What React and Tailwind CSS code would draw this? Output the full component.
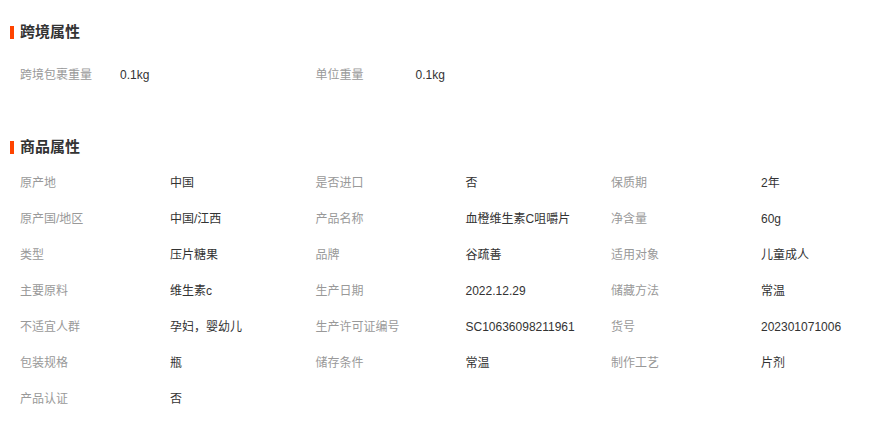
const CROSS = [
  ["跨境包裹重量", "0.1kg"],
  ["单位重量", "0.1kg"],
];

const PRODUCT = [
  ["原产地", "中国"],
  ["是否进口", "否"],
  ["保质期", "2年"],
  ["原产国/地区", "中国/江西"],
  ["产品名称", "血橙维生素C咀嚼片"],
  ["净含量", "60g"],
  ["类型", "压片糖果"],
  ["品牌", "谷疏善"],
  ["适用对象", "儿童成人"],
  ["主要原料", "维生素c"],
  ["生产日期", "2022.12.29"],
  ["储藏方法", "常温"],
  ["不适宜人群", "孕妇，婴幼儿"],
  ["生产许可证编号", "SC10636098211961"],
  ["货号", "202301071006"],
  ["包装规格", "瓶"],
  ["储存条件", "常温"],
  ["制作工艺", "片剂"],
  ["产品认证", "否"],
];

function SectionTitle({ children }) {
  return (
    <div className="flex items-center h-6">
      <span className="w-[4px] h-[13px] bg-[#ff4400] mr-[6px]" />
      <h3 className="text-[15px] font-bold text-[#333]">{children}</h3>
    </div>
  );
}

function Attr({ label, value, labelWidth }) {
  return (
    <div className="flex items-center h-9 w-[295.5px] shrink-0">
      <span className="text-[#999] shrink-0" style={{ width: labelWidth }}>
        {label}
      </span>
      <span className="text-[#333]">{value}</span>
    </div>
  );
}

export default function App() {
  return (
    <div
      className="w-[881px] h-[422px] bg-white pl-[10px] pt-[20px] text-[12px]"
      style={{ fontFamily: '"Liberation Sans", "Noto Sans CJK SC", sans-serif' }}
    >
      <SectionTitle>跨境属性</SectionTitle>
      <div className="flex pl-[10px] mt-[13px]">
        {CROSS.map(([l, v]) => (
          <Attr key={l} label={l} value={v} labelWidth={100} />
        ))}
      </div>

      <div className="mt-[42px]">
        <SectionTitle>商品属性</SectionTitle>
      </div>
      <div className="flex flex-wrap pl-[10px] mt-[6px] w-[900px]">
        {PRODUCT.map(([l, v]) => (
          <Attr key={l} label={l} value={v} labelWidth={150} />
        ))}
      </div>
    </div>
  );
}
